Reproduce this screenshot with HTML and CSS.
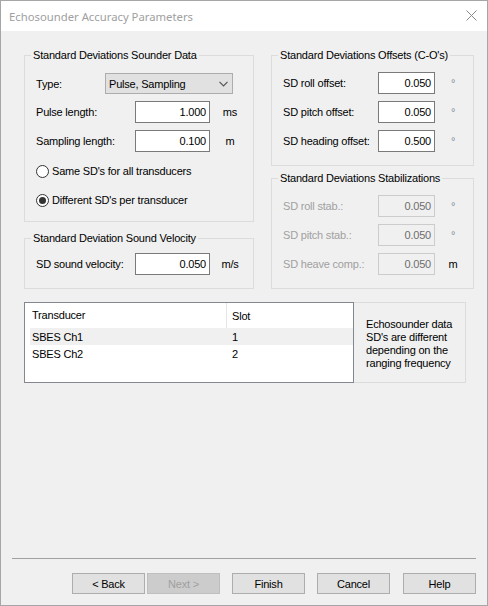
FILE: index.html
```html
<!DOCTYPE html>
<html>
<head>
<meta charset="utf-8">
<link rel="stylesheet" href="styles.css">
</head>
<body>
<div class="window">
  <div class="titlebar">
    <span class="title">Echosounder Accuracy Parameters</span>
    <svg class="close" width="11" height="11" viewBox="0 0 11 11"><path d="M0.5 0.5 L10.5 10.5 M10.5 0.5 L0.5 10.5" stroke="#8a8a8a" stroke-width="1" fill="none"/></svg>
  </div>
  <div class="content">
    <div class="columns">
      <div class="col col-left">
        <fieldset class="group g-sounder">
          <legend>Standard Deviations Sounder Data</legend>
          <div class="row r-type">
            <span class="lbl lbl-type">Type:</span>
            <div class="combo"><span>Pulse, Sampling</span><svg width="9" height="6" viewBox="0 0 9 6"><path d="M0.5 0.8 L4.5 4.8 L8.5 0.8" stroke="#555" stroke-width="1.2" fill="none"/></svg></div>
          </div>
          <div class="row r-gap">
            <span class="lbl lbl-left">Pulse length:</span>
            <div class="tb tb-left">1.000</div>
            <span class="unit unit-left">ms</span>
          </div>
          <div class="row r-gap">
            <span class="lbl lbl-left">Sampling length:</span>
            <div class="tb tb-left">0.100</div>
            <span class="unit unit-left">m</span>
          </div>
          <div class="radio-row r-radio1"><span class="radio"></span><span>Same SD's for all transducers</span></div>
          <div class="radio-row r-radio2"><span class="radio checked"></span><span>Different SD's per transducer</span></div>
        </fieldset>
        <fieldset class="group g-velocity">
          <legend>Standard Deviation Sound Velocity</legend>
          <div class="row r-vel">
            <span class="lbl lbl-left">SD sound velocity:</span>
            <div class="tb tb-left">0.050</div>
            <span class="unit unit-left">m/s</span>
          </div>
        </fieldset>
      </div>
      <div class="col col-right">
        <fieldset class="group g-offsets">
          <legend>Standard Deviations Offsets (C-O's)</legend>
          <div class="row r-first">
            <span class="lbl lbl-right">SD roll offset:</span>
            <div class="tb tb-right">0.050</div>
            <span class="unit unit-right deg">°</span>
          </div>
          <div class="row r-gap">
            <span class="lbl lbl-right">SD pitch offset:</span>
            <div class="tb tb-right">0.050</div>
            <span class="unit unit-right deg">°</span>
          </div>
          <div class="row r-gap">
            <span class="lbl lbl-right">SD heading offset:</span>
            <div class="tb tb-right">0.500</div>
            <span class="unit unit-right deg">°</span>
          </div>
        </fieldset>
        <fieldset class="group g-stab">
          <legend>Standard Deviations Stabilizations</legend>
          <div class="row r-first">
            <span class="lbl lbl-right disabled">SD roll stab.:</span>
            <div class="tb tb-right tb-disabled">0.050</div>
            <span class="unit unit-right deg">°</span>
          </div>
          <div class="row r-gap">
            <span class="lbl lbl-right disabled">SD pitch stab.:</span>
            <div class="tb tb-right tb-disabled">0.050</div>
            <span class="unit unit-right deg">°</span>
          </div>
          <div class="row r-gap">
            <span class="lbl lbl-right disabled">SD heave comp.:</span>
            <div class="tb tb-right tb-disabled">0.050</div>
            <span class="unit unit-right">m</span>
          </div>
        </fieldset>
      </div>
    </div>
    <div class="list-area">
      <div class="listview">
        <div class="lv-head"><span class="c1">Transducer</span><span class="c2">Slot</span></div>
        <div class="lv-row sel"><span class="c1">SBES Ch1</span><span class="c2">1</span></div>
        <div class="lv-row"><span class="c1">SBES Ch2</span><span class="c2">2</span></div>
      </div>
      <div class="info">Echosounder data<br>SD's are different<br>depending on the<br>ranging frequency</div>
    </div>
  </div>
  <div class="footer">
    <div class="sep"></div>
    <div class="buttons">
      <div class="btn">&lt; Back</div>
      <div class="btn btn-disabled b-next">Next &gt;</div>
      <div class="btn b-wide">Finish</div>
      <div class="btn b-wide">Cancel</div>
      <div class="btn b-help">Help</div>
    </div>
  </div>
</div>
</body>
</html>
```
FILE: styles.css
```css
html, body {
  margin: 0;
  padding: 0;
  background: #f0f0f0;
}

.window {
  width: 488px;
  height: 606px;
  box-sizing: border-box;
  border: 1px solid #a6a6a6;
  background: #f0f0f0;
  display: flex;
  flex-direction: column;
  font-family: "Liberation Sans", Arial, sans-serif;
  font-size: 11px;
  letter-spacing: -0.2px;
  color: #000;
}

.titlebar {
  height: 30px;
  flex: none;
  background: #fff;
  display: flex;
  align-items: center;
  justify-content: space-between;
  padding: 0 10px 0 8px;
  letter-spacing: 0;
}

.title {
  font-family: "Noto Sans", "Open Sans", sans-serif;
  font-size: 11.3px;
  color: #a0a0a0;
  margin-top: 1px;
}

.close {
  display: block;
  margin-top: -1px;
}

.content {
  flex: 1;
  padding: 18px 13px 0 23px;
}

.columns {
  display: flex;
  gap: 17px;
}

.col-left { width: 230px; }
.col-right { width: 203px; }

.group {
  margin: 0;
  padding: 0 0 13px 0;
  border: 1px solid #dcdcdc;
  min-width: 0;
}

.group legend {
  margin-left: 6px;
  padding: 0 2px;
  line-height: 13px;
  height: 13px;
}

.g-velocity { margin-top: 10px; }
.g-stab { margin-top: 6px; }

.row {
  display: flex;
  align-items: center;
  height: 22px;
  padding-left: 11px;
}

.r-type { margin-top: 11px; height: 21px; }
.r-gap { margin-top: 7px; }
.r-first { margin-top: 10px; }
.r-vel { margin-top: 8px; }

.lbl { white-space: nowrap; }
.lbl-type { width: 69px; }
.lbl-left { width: 99px; }
.lbl-right { width: 95px; }

.disabled { color: #a0a0a0; }

.combo {
  width: 128px;
  height: 21px;
  box-sizing: border-box;
  border: 1px solid #adadad;
  background: #e1e1e1;
  display: flex;
  align-items: center;
  justify-content: space-between;
  padding: 0 4px 0 3px;
}

.combo svg { display: block; }

.tb {
  height: 22px;
  box-sizing: border-box;
  border: 1px solid #7a7a7a;
  background: #fff;
  display: flex;
  align-items: center;
  justify-content: flex-end;
  padding-right: 3px;
}

.tb-left { width: 75px; }
.tb-right { width: 57px; }

.tb-disabled {
  background: #f0f0f0;
  border-color: #cccccc;
  color: #6d6d6d;
}

.unit { text-align: center; }
.unit-left { width: 40px; }
.unit-right { width: 36px; }
.deg { color: #7a8a9a; }

.radio-row {
  display: flex;
  align-items: center;
  height: 16px;
  padding-left: 11px;
}

.r-radio1 { margin-top: 11px; }
.r-radio2 { margin-top: 13px; }

.radio {
  width: 13px;
  height: 13px;
  box-sizing: border-box;
  border: 1px solid #333;
  border-radius: 50%;
  background: #fff;
  margin-right: 3px;
  display: flex;
  align-items: center;
  justify-content: center;
}

.radio.checked::after {
  content: "";
  width: 7px;
  height: 7px;
  border-radius: 50%;
  background: #333;
}

.list-area {
  display: flex;
  margin-top: 13px;
}

.listview {
  width: 330px;
  height: 81px;
  box-sizing: border-box;
  border: 1px solid #828790;
  background: #fff;
}

.lv-head {
  height: 25px;
  display: flex;
  align-items: center;
}

.lv-head .c1 {
  width: 194px;
  padding-left: 7px;
  height: 25px;
  line-height: 25px;
  border-right: 1px solid #e5e5e5;
}

.lv-head .c2 { padding-left: 5px; }

.lv-row {
  height: 17px;
  display: flex;
  align-items: center;
  margin-left: 5px;
}

.lv-row.sel { background: #f0f0f0; }

.lv-row .c1 { width: 200px; padding-left: 2px; }
.lv-row .c2 { padding-left: 0; }

.info {
  width: 112px;
  height: 81px;
  box-sizing: border-box;
  border: 1px solid #dcdcdc;
  border-left: none;
  padding: 15px 0 0 12px;
  line-height: 13px;
}

.footer {
  flex: none;
  padding: 0 11px 11px 11px;
}

.sep {
  height: 1px;
  background: #a0a0a0;
}

.buttons {
  display: flex;
  justify-content: flex-end;
  margin-top: 14px;
}

.btn {
  width: 73px;
  height: 21px;
  box-sizing: border-box;
  border: 1px solid #adadad;
  background: #e1e1e1;
  display: flex;
  align-items: center;
  justify-content: center;
}

.btn-disabled {
  background: #cccccc;
  border-color: #bfbfbf;
  color: #a0a0a0;
}

.b-next { margin-left: 2px; }
.b-wide { margin-left: 12px; }
.b-help { margin-left: 13px; }
```
